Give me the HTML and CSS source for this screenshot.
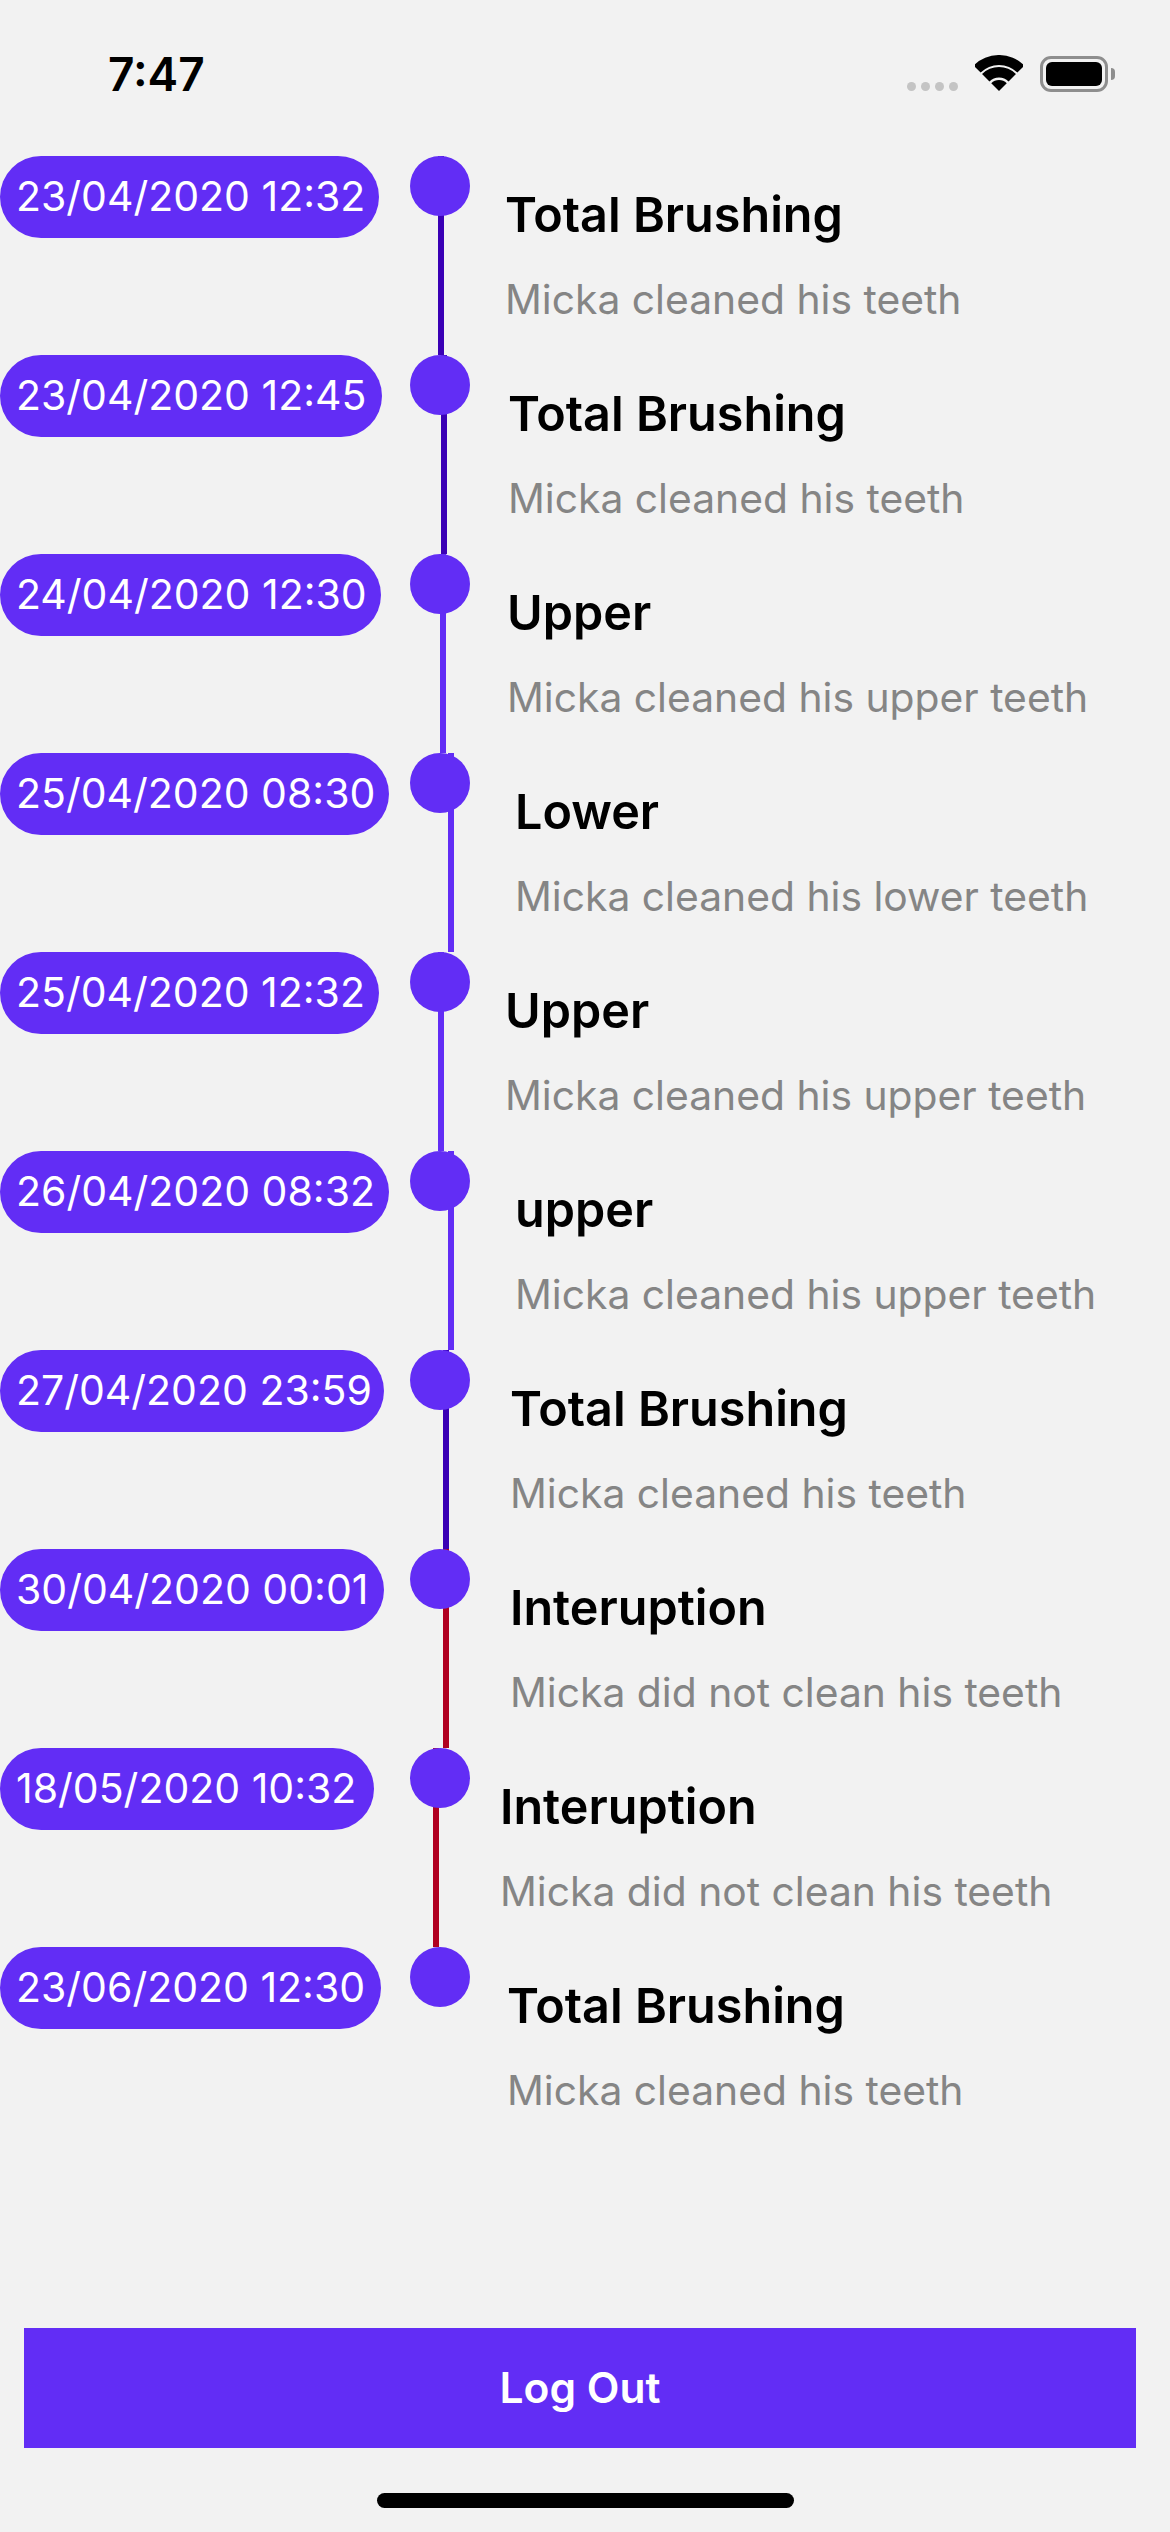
FILE: index.html
```html
<!doctype html>
<html lang="en-US">
    <head>
        <meta charset="utf-8"/>
        <title>Timeline</title>
        <link rel="stylesheet" href="styles.css">
    </head>
    <body>
        <main class="page">
            <header class="status">
                <span class="clock">7:47</span>
                <div class="status-icons">
                    <div class="signal"><i></i><i></i><i></i><i></i></div>
                    <svg class="wifi" viewBox="0 0 48 36">
                        <path d="M-1.46 10.54A36 36 0 0 1 49.46 10.54L42.38 17.62A26 26 0 0 0 5.62 17.62Z"/>
                        <path d="M7.03 19.03A24 24 0 0 1 40.97 19.03L33.55 26.45A13.5 13.5 0 0 0 14.45 26.45Z"/>
                        <path d="M24 36L16.22 28.22A11 11 0 0 1 31.78 28.22Z"/>
                    </svg>
                    <div class="battery"><div class="battery-level"></div></div>
                    <div class="battery-nub"></div>
                </div>
            </header>

            <section class="timeline">
                <article class="row">
                    <span class="date">23/04/2020 12:32</span>
                    <span class="dot"></span>
                    <div class="detail line-dark">
                        <h2>Total Brushing</h2>
                        <p>Micka cleaned his teeth</p>
                    </div>
                </article>
                <article class="row">
                    <span class="date">23/04/2020 12:45</span>
                    <span class="dot"></span>
                    <div class="detail line-dark">
                        <h2>Total Brushing</h2>
                        <p>Micka cleaned his teeth</p>
                    </div>
                </article>
                <article class="row">
                    <span class="date">24/04/2020 12:30</span>
                    <span class="dot"></span>
                    <div class="detail line-main">
                        <h2>Upper</h2>
                        <p>Micka cleaned his upper teeth</p>
                    </div>
                </article>
                <article class="row">
                    <span class="date">25/04/2020 08:30</span>
                    <span class="dot"></span>
                    <div class="detail line-main">
                        <h2>Lower</h2>
                        <p>Micka cleaned his lower teeth</p>
                    </div>
                </article>
                <article class="row">
                    <span class="date">25/04/2020 12:32</span>
                    <span class="dot"></span>
                    <div class="detail line-main">
                        <h2>Upper</h2>
                        <p>Micka cleaned his upper teeth</p>
                    </div>
                </article>
                <article class="row">
                    <span class="date">26/04/2020 08:32</span>
                    <span class="dot"></span>
                    <div class="detail line-main">
                        <h2>upper</h2>
                        <p>Micka cleaned his upper teeth</p>
                    </div>
                </article>
                <article class="row">
                    <span class="date">27/04/2020 23:59</span>
                    <span class="dot"></span>
                    <div class="detail line-dark">
                        <h2>Total Brushing</h2>
                        <p>Micka cleaned his teeth</p>
                    </div>
                </article>
                <article class="row">
                    <span class="date">30/04/2020 00:01</span>
                    <span class="dot"></span>
                    <div class="detail line-red">
                        <h2>Interuption</h2>
                        <p>Micka did not clean his teeth</p>
                    </div>
                </article>
                <article class="row">
                    <span class="date">18/05/2020 10:32</span>
                    <span class="dot"></span>
                    <div class="detail line-red">
                        <h2>Interuption</h2>
                        <p>Micka did not clean his teeth</p>
                    </div>
                </article>
                <article class="row">
                    <span class="date">23/06/2020 12:30</span>
                    <span class="dot"></span>
                    <div class="detail">
                        <h2>Total Brushing</h2>
                        <p>Micka cleaned his teeth</p>
                    </div>
                </article>
            </section>

            <button class="logout" type="button">Log Out</button>
            <div class="home-bar"></div>
        </main>
    </body>
</html>
```

FILE: styles.css
```css
* {
    box-sizing: border-box;
}

body {
    background-color: #f2f2f2;
    margin: 0;
    color: #000;
    font-family: Inter, "Noto Sans", sans-serif;
}

.page {
    width: 1170px;
    height: 2532px;
    display: flex;
    flex-direction: column;
    overflow: hidden;
}

.status {
    height: 156px;
    flex: none;
    padding: 50px 55px 0 108px;
    display: flex;
    justify-content: space-between;
    align-items: flex-start;
}

.clock {
    font-size: 46px;
    font-weight: 600;
    line-height: 48px;
}

.status-icons {
    display: flex;
    align-items: flex-start;
    padding-top: 5px;
}

.signal {
    display: flex;
    gap: 5px;
    margin-top: 27px;
    margin-right: 17px;
}

.signal i {
    width: 9px;
    height: 9px;
    border-radius: 50%;
    background-color: #c4c4c4;
}

.wifi {
    width: 48px;
    height: 36px;
    margin-right: 17px;
}

.battery {
    width: 68px;
    height: 36px;
    margin-top: 1px;
    padding: 3px;
    border: 3px solid #8e8e8e;
    border-radius: 11px;
}

.battery-level {
    height: 100%;
    background-color: #000;
    border-radius: 6px;
}

.battery-nub {
    width: 4px;
    height: 12px;
    margin: 13px 0 0 3px;
    background-color: #8e8e8e;
    border-radius: 0 6px 6px 0;
}

.timeline {
    flex: 1;
}

.row {
    position: relative;
    height: 199px;
    display: flex;
    align-items: stretch;
}

.date {
    flex: none;
    width: 381px;
    height: 82px;
    padding-left: 16px;
    background-color: #622df5;
    color: #fff;
    border-radius: 41px;
    font-size: 41px;
    line-height: 80px;
    white-space: nowrap;
}

/* each pill hugs its own date, the digits are not the same width */
.row:nth-child(1) .date,
.row:nth-child(5) .date {
    width: 379px;
}

.row:nth-child(2) .date {
    width: 382px;
}

.row:nth-child(4) .date,
.row:nth-child(6) .date {
    width: 389px;
}

.row:nth-child(7) .date,
.row:nth-child(8) .date {
    width: 384px;
}

.row:nth-child(9) .date {
    width: 374px;
}

.dot {
    position: absolute;
    left: 410px;
    top: 0;
    width: 60px;
    height: 60px;
    border-radius: 50%;
    background-color: #622df5;
}

.detail {
    margin-left: 59px;
    padding: 31px 0 0 61px;
    border-left: 6px solid transparent;
}

.line-dark {
    border-left-color: #3a00b5;
}

.line-main {
    border-left-color: #622df5;
}

.line-red {
    border-left-color: #b00020;
}

.detail h2 {
    margin: 0;
    font-size: 48.5px;
    font-weight: 600;
    line-height: 56px;
}

.detail p {
    margin: 32px 0 0;
    color: #858585;
    font-size: 40.8px;
    line-height: 48px;
}

.logout {
    flex: none;
    width: 1112px;
    height: 120px;
    margin: 0 0 45px 24px;
    padding-bottom: 3px;
    border: none;
    background-color: #622df5;
    color: #fff;
    font-family: inherit;
    font-size: 42.5px;
    font-weight: 600;
}

.home-bar {
    flex: none;
    width: 417px;
    height: 15px;
    margin: 0 0 24px 377px;
    background-color: #000;
    border-radius: 8px;
}
```
